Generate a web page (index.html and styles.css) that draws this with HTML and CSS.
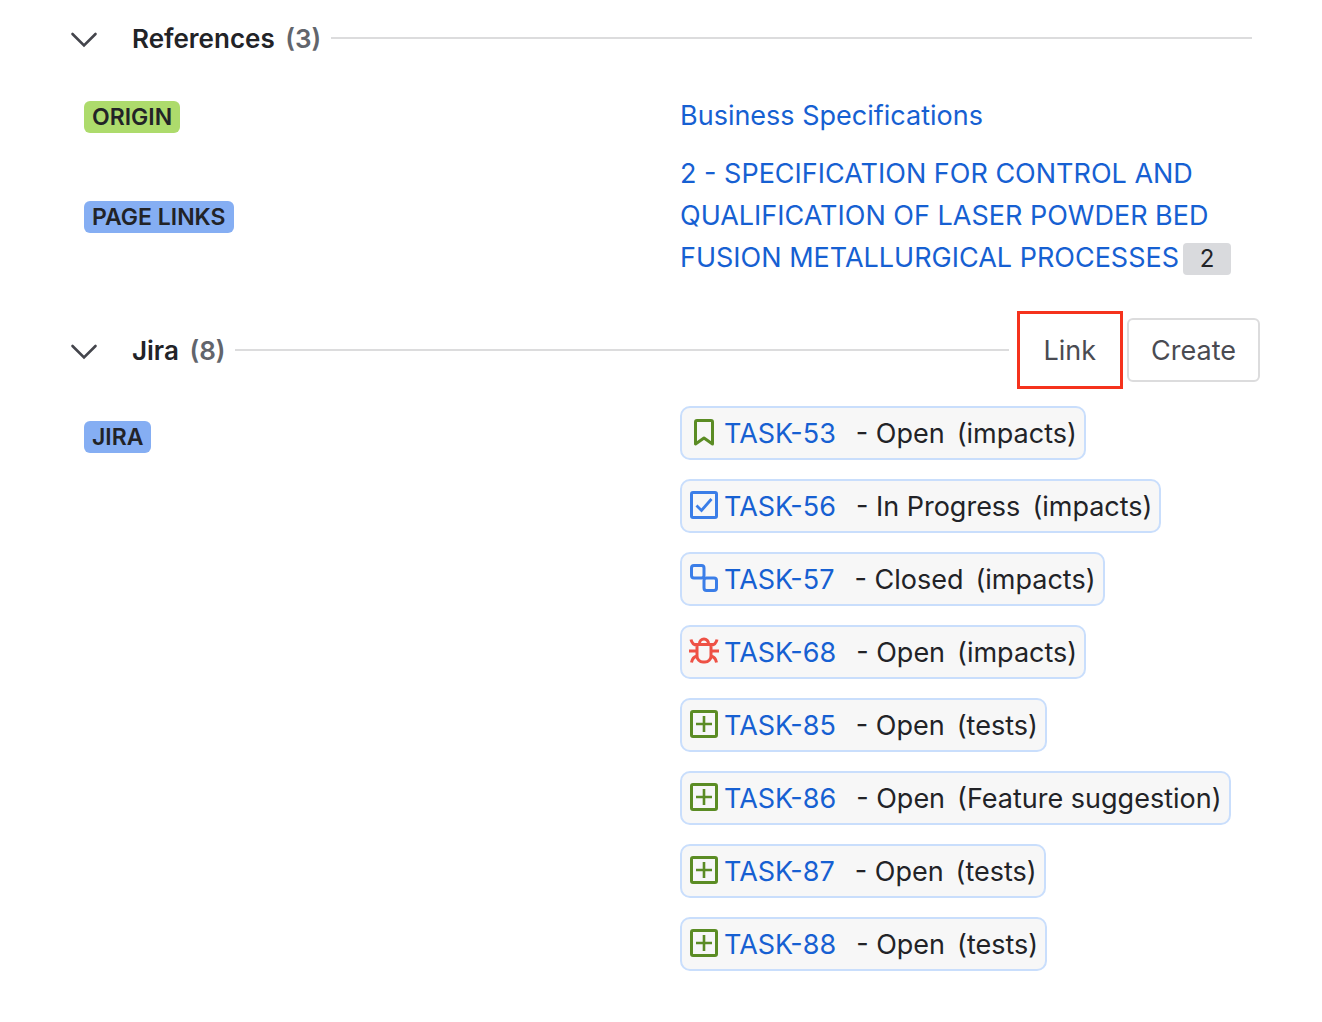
FILE: index.html
```html
<!DOCTYPE html>
<html lang="en">
<head>
<meta charset="utf-8">
<meta name="viewport" content="width=device-width, initial-scale=1">
<title>References and Jira links</title>
<link rel="stylesheet" href="styles.css">
</head>
<body>
<svg class="sprite" aria-hidden="true">
  <symbol id="chevron" viewBox="0 0 28 28"><path d="M2.500 9 14 20.500 25.500 9" fill="none" stroke="#44454c" stroke-width="2.600" stroke-linecap="round" stroke-linejoin="miter"/></symbol>
  <symbol id="story" viewBox="0 0 32 32"><path d="M7.500 28V6a1.500 1.500 0 0 1 1.500-1.500h14A1.500 1.500 0 0 1 24.500 6v22L16 22z" fill="none" stroke="#5b8c24" stroke-width="3" stroke-linejoin="round"/></symbol>
  <symbol id="task" viewBox="0 0 32 32"><rect x="3.500" y="3.500" width="25" height="25" rx="1.500" fill="none" stroke="#3b7ee8" stroke-width="3"/><path d="m8.500 16.500 5 5L23.500 10" fill="none" stroke="#3b7ee8" stroke-width="2.800"/></symbol>
  <symbol id="subtask" viewBox="0 0 32 32"><g fill="none" stroke="#3b7ee8" stroke-width="3"><rect x="3.500" y="3.500" width="12.500" height="12.500" rx="2.500"/><rect x="16" y="16" width="12.500" height="12.500" rx="2.500"/></g></symbol>
  <symbol id="bug" viewBox="0 0 32 32"><g fill="none" stroke="#ee5145" stroke-width="3"><path d="M9 9.500h14V21a6 6 0 0 1-6 6h-2a6 6 0 0 1-6-6zM11.500 9V8.500a4.500 4.500 0 0 1 9 0V9M1 16h8M23 16h8M3 4.500q1 5 6 6M29 4.500q-1 5-6 6M9 21q-4.500 1-5.500 6.500M23 21q4.500 1 5.500 6.500"/></g></symbol>
  <symbol id="test" viewBox="0 0 32 32"><rect x="3.500" y="3.500" width="25" height="25" rx="1.500" fill="none" stroke="#5b8c24" stroke-width="3"/><path d="M16 8v16M8 16h16" stroke="#5b8c24" stroke-width="2.600"/></symbol>
</svg>
<main class="panel">
  <section class="section">
    <header class="section-header">
      <button class="toggle" type="button" aria-label="Collapse References" aria-expanded="true"><svg class="chevron"><use href="#chevron"/></svg></button>
      <h2 class="title">References <span class="count">(3)</span></h2>
      <span class="rule"></span>
    </header>
    <dl class="fields">
      <dt class="term"><span class="tag tag-green">ORIGIN</span></dt>
      <dd class="value"><a class="link" href="#">Business Specifications</a></dd>
      <dt class="term"><span class="tag tag-blue">PAGE LINKS</span></dt>
      <dd class="value"><a class="link" href="#">2 - SPECIFICATION FOR CONTROL AND QUALIFICATION OF LASER POWDER BED FUSION METALLURGICAL PROCESSES</a><span class="badge">2</span></dd>
    </dl>
  </section>
  <section class="section">
    <header class="section-header">
      <button class="toggle" type="button" aria-label="Collapse Jira" aria-expanded="true"><svg class="chevron"><use href="#chevron"/></svg></button>
      <h2 class="title">Jira <span class="count">(8)</span></h2>
      <span class="rule"></span>
      <div class="actions">
        <button class="button button-marked" type="button">Link</button>
        <button class="button" type="button">Create</button>
      </div>
    </header>
    <dl class="fields fields-top">
      <dt class="term"><span class="tag tag-blue">JIRA</span></dt>
      <dd class="value">
        <ul class="issues">
          <li class="issue"><svg class="icon"><use href="#story"/></svg><a class="link" href="#">TASK-53</a><span class="status">- Open</span><span>(impacts)</span></li>
          <li class="issue"><svg class="icon"><use href="#task"/></svg><a class="link" href="#">TASK-56</a><span class="status">- In Progress</span><span>(impacts)</span></li>
          <li class="issue"><svg class="icon"><use href="#subtask"/></svg><a class="link" href="#">TASK-57</a><span class="status">- Closed</span><span>(impacts)</span></li>
          <li class="issue"><svg class="icon"><use href="#bug"/></svg><a class="link" href="#">TASK-68</a><span class="status">- Open</span><span>(impacts)</span></li>
          <li class="issue"><svg class="icon"><use href="#test"/></svg><a class="link" href="#">TASK-85</a><span class="status">- Open</span><span>(tests)</span></li>
          <li class="issue"><svg class="icon"><use href="#test"/></svg><a class="link" href="#">TASK-86</a><span class="status">- Open</span><span>(Feature suggestion)</span></li>
          <li class="issue"><svg class="icon"><use href="#test"/></svg><a class="link" href="#">TASK-87</a><span class="status">- Open</span><span>(tests)</span></li>
          <li class="issue"><svg class="icon"><use href="#test"/></svg><a class="link" href="#">TASK-88</a><span class="status">- Open</span><span>(tests)</span></li>
        </ul>
      </dd>
    </dl>
  </section>
</main>
</body>
</html>
```
FILE: styles.css
```css
* {
  box-sizing: border-box;
}

body {
  margin: 0;
  background: #fff;
  color: #222327;
  font: 27px/42px Inter, "Liberation Sans", sans-serif;
}

.sprite {
  position: absolute;
  width: 0;
  height: 0;
}

.panel {
  padding: 0 62px 32px 70px;
}

.section + .section {
  margin-top: 25px;
}

.section-header {
  display: flex;
  align-items: center;
  height: 76px;
}

.toggle {
  display: flex;
  margin: 0 34px 0 0;
  padding: 2px 0 0;
  border: 0;
  background: none;
}

.chevron {
  width: 28px;
  height: 28px;
}

.title {
  margin: 0;
  padding-top: 2px;
  font-size: 26px;
  font-weight: 600;
}

.count {
  margin-left: 4px;
  color: #62656c;
}

.rule {
  flex: 1;
  height: 2px;
  margin: 0 8px 0 10px;
  background: #dcdcdd;
}

.actions {
  display: flex;
  align-items: center;
  gap: 4px;
}

.button {
  height: 64px;
  padding: 2px 22px 0;
  border: 2px solid #dcdcdd;
  border-radius: 6px;
  background: #fff;
  color: #4a4b52;
  font: inherit;
}

.button-marked {
  height: 78px;
  padding: 2px 24px 0;
  border: 3px solid #f5321d;
  border-radius: 0;
}

.fields {
  display: grid;
  grid-template-columns: minmax(0, 1fr) minmax(0, 1fr);
  align-items: center;
  row-gap: 16px;
  margin: 0 -16px 0 14px;
  padding: 19px 0 8px;
}

.fields-top {
  align-items: start;
  padding-top: 18px;
}

.term {
  display: flex;
  padding-top: 2px;
}

.fields-top .term {
  padding-top: 15px;
}

.value {
  margin: 0;
  padding-right: 40px;
}

.tag {
  padding: 0 8px;
  border-radius: 6px;
  font-size: 23px;
  font-weight: 600;
  line-height: 32px;
}

.tag-green {
  background: #addb6c;
}

.tag-blue {
  background: #85aef3;
}

.link {
  color: #1660d2;
  text-decoration: none;
}

.badge {
  display: inline-block;
  width: 48px;
  margin-left: 4px;
  border-radius: 4px;
  background: #d9dadd;
  font-size: 24px;
  line-height: 32px;
  text-align: center;
}

.issues {
  display: flex;
  flex-direction: column;
  align-items: flex-start;
  gap: 19px;
  margin: 0;
  padding: 0;
  list-style: none;
}

.issue {
  display: flex;
  align-items: center;
  height: 54px;
  padding: 2px 7px 0 6px;
  border: 2px solid #c9defc;
  border-radius: 10px;
  background: #f7f7f7;
  white-space: nowrap;
}

.icon {
  width: 32px;
  height: 32px;
  margin: 0 4px 4px 0;
}

.status {
  margin: 0 12px 0 20px;
}
```
